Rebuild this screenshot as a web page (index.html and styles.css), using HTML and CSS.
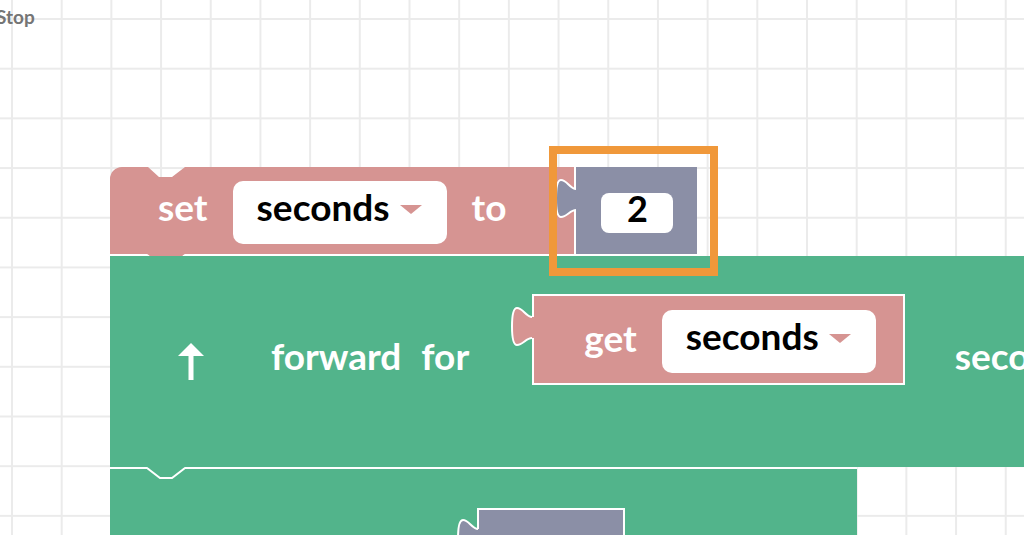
FILE: index.html
```html
<!DOCTYPE html>
<html lang="en">
<head>
<meta charset="utf-8">
<title>Blocks</title>
<link rel="stylesheet" href="styles.css">
</head>
<body>
<div class="workspace">
  <div class="stop">Stop</div>

  <div class="stack">
    <div class="block set">
      <div class="set-body">
        <span class="label">set</span>
        <div class="dropdown"><span class="dd-text">seconds</span><i class="caret"></i></div>
        <span class="label">to</span>
      </div>
      <div class="value">
        <svg class="tab tab-value" viewBox="0 0 24 41" width="24" height="41">
          <path class="tab-fill" d="M21 11 C15 11 12 2 6 2 C2 2 1 11 1 20.5 C1 30 2 39 6 39 C12 39 15 32 21 32 H24 V11 Z"/>
          <rect class="tab-fill" x="19" y="11" width="5" height="21"/>
          <path class="tab-line" d="M21 11 C15 11 12 2 6 2 C2 2 1 11 1 20.5 C1 30 2 39 6 39 C12 39 15 32 21 32"/>
        </svg>
        <div class="field">2</div>
      </div>
      <svg class="notch-tab" viewBox="0 0 38 13" width="38" height="13">
        <polygon points="0,0 13,11 25,11 38,0" fill="#d69492"/>
        <polyline points="0,1 13,12 25,12 38,1" fill="none" stroke="#fff" stroke-width="2"/>
      </svg>
    </div>

    <div class="block motion first">
      <svg class="arrow" viewBox="0 0 26 37" width="26" height="37">
        <polygon points="13,0 26,13 0,13" fill="#fff"/>
        <rect x="10.5" y="12" width="5" height="25" fill="#fff"/>
      </svg>
      <span class="label l-forward">forward</span>
      <span class="label l-for">for</span>
      <div class="get">
        <svg class="tab tab-get" viewBox="0 0 24 41" width="24" height="41">
          <path class="tab-fill pink" d="M21 11 C15 11 12 2 6 2 C2 2 1 11 1 20.5 C1 30 2 39 6 39 C12 39 15 32 21 32 H24 V11 Z"/>
          <rect class="tab-fill pink" x="19" y="11" width="5" height="21"/>
          <path class="tab-line" d="M21 11 C15 11 12 2 6 2 C2 2 1 11 1 20.5 C1 30 2 39 6 39 C12 39 15 32 21 32"/>
        </svg>
        <span class="label l-get">get</span>
        <div class="dropdown dd-get"><span class="dd-text">seconds</span><i class="caret"></i></div>
      </div>
      <span class="label l-seconds">seconds</span>
    </div>

    <div class="block motion second">
      <svg class="notch-dent" viewBox="0 0 38 13" width="38" height="13">
        <polygon points="0,0 13,11 25,11 38,0" fill="#52b48b"/>
        <polyline points="0,1 13,11 25,11 38,1" fill="none" stroke="#fff" stroke-width="2"/>
      </svg>
      <div class="num-slot">
        <svg class="tab tab-slot" viewBox="0 0 24 41" width="24" height="41">
          <path class="tab-fill" d="M21 11 C15 11 12 2 6 2 C2 2 1 11 1 20.5 C1 30 2 39 6 39 C12 39 15 32 21 32 H24 V11 Z"/>
          <rect class="tab-fill" x="19" y="11" width="5" height="21"/>
          <path class="tab-line" d="M21 11 C15 11 12 2 6 2 C2 2 1 11 1 20.5 C1 30 2 39 6 39 C12 39 15 32 21 32"/>
        </svg>
      </div>
    </div>
  </div>

  <div class="highlight"></div>
</div>
</body>
</html>
```

FILE: styles.css
```css
* {
  box-sizing: border-box;
}

html,
body {
  margin: 0;
  padding: 0;
}

body {
  font-family: "Lato", "Noto Sans", sans-serif;
  overflow: hidden;
}

.workspace {
  position: relative;
  width: 1024px;
  height: 535px;
  overflow: hidden;
  background-color: #ffffff;
  background-image:
    linear-gradient(to right, #ebebeb 2px, transparent 2px),
    linear-gradient(to bottom, #ebebeb 2px, transparent 2px);
  background-size: 49.7px 49.7px;
  background-position: 11px 18px;
}

.stop {
  margin: 5px 0 0 -4px;
  font-size: 19px;
  font-weight: 700;
  color: #757575;
  line-height: 24px;
}

.stack {
  position: absolute;
  left: 110px;
  top: 167px;
  display: flex;
  flex-direction: column;
  align-items: flex-start;
}

.label {
  color: #ffffff;
  font-size: 37px;
  font-weight: 700;
  white-space: nowrap;
  line-height: 1;
}

/* set block */
.set {
  position: relative;
  display: flex;
  border-bottom: 2px solid #ffffff;
}

.set-body {
  display: flex;
  align-items: center;
  gap: 25px;
  height: 87px;
  padding: 4px 68px 0 48px;
  background: #d69492;
  clip-path: path("M0 12 A12 12 0 0 1 12 0 H38 L49 10 H62 L75 0 H2000 V200 H0 Z");
}

.set-body .label {
  margin-bottom: 12px;
}

.dropdown {
  display: flex;
  align-items: center;
  gap: 10px;
  height: 63px;
  padding: 0 25px 13px 24px;
  background: #ffffff;
  border-radius: 10px;
}

.dd-text {
  color: #000000;
  font-size: 37px;
  font-weight: 700;
  line-height: 1;
}

.caret {
  width: 0;
  height: 0;
  border-left: 11px solid transparent;
  border-right: 11px solid transparent;
  border-top: 9px solid #d69492;
  margin-top: 7px;
}

.value {
  position: relative;
  display: flex;
  align-items: center;
  padding: 4px 24px 0 25px;
  background: #8b8fa6;
  border-left: 2px solid #ffffff;
}

.field {
  width: 72px;
  height: 40px;
  border-radius: 8px;
  background: #ffffff;
  display: flex;
  align-items: center;
  justify-content: center;
  color: #000000;
  font-size: 36px;
  font-weight: 700;
  line-height: 1;
  padding-bottom: 9px;
}

.tab {
  position: absolute;
  overflow: visible;
}

.tab-fill {
  fill: #8b8fa6;
}

.tab-fill.pink {
  fill: #d69492;
}

.tab-line {
  fill: none;
  stroke: #ffffff;
  stroke-width: 2;
}

.tab-value {
  left: -21px;
  top: 11px;
}

.notch-tab {
  position: absolute;
  left: 37px;
  top: 100%;
}

/* motion blocks */
.motion {
  position: relative;
  background: #52b48b;
}

.first {
  display: flex;
  align-items: center;
  width: 1000px;
  height: 211px;
  padding-left: 68px;
}

.arrow {
  flex: none;
}

.first > .label {
  margin-bottom: 13px;
}

.l-forward {
  margin-left: 67px;
}

.l-for {
  margin-left: 20px;
}

.l-seconds {
  margin-left: 50px;
}

.get {
  position: relative;
  display: flex;
  align-items: center;
  gap: 25px;
  height: 91px;
  margin-left: 63px;
  margin-bottom: 44px;
  padding: 2px 27px 0 50px;
  background: #d69492;
  border: 2px solid #ffffff;
}

.l-get {
  margin-bottom: 7px;
}

.dd-get {
  margin-top: 2px;
}

.tab-get {
  left: -23px;
  top: 10px;
}

.second {
  display: flex;
  align-items: flex-start;
  width: 747px;
  height: 120px;
  padding: 39px 0 0 367px;
  border-top: 2px solid #ffffff;
}

.notch-dent {
  position: absolute;
  left: 37px;
  top: -2px;
}

.num-slot {
  position: relative;
  width: 148px;
  height: 91px;
  background: #8b8fa6;
  border: 2px solid #ffffff;
}

.tab-slot {
  left: -22px;
  top: 8px;
}

.highlight {
  position: absolute;
  left: 549px;
  top: 146px;
  width: 169px;
  height: 130px;
  border: 8px solid #f0983a;
}
```
